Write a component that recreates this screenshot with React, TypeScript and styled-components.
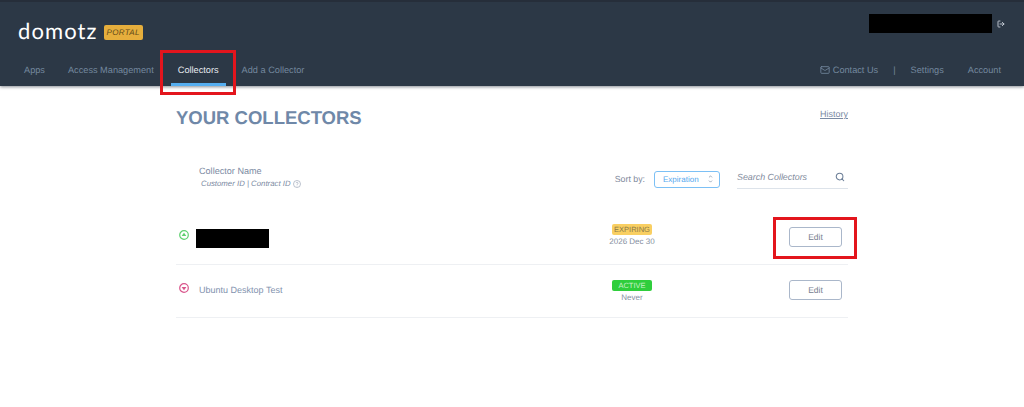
import React from 'react';
import styled, { createGlobalStyle } from 'styled-components';
import { LogOut, Mail, Search, ChevronUp, ChevronDown } from 'lucide-react';

const GlobalStyle = createGlobalStyle`
  html, body {
    margin: 0;
    padding: 0;
    background-color: #fff;
    font-family: "Liberation Sans", Arial, sans-serif;
  }

  * {
    text-rendering: geometricPrecision;
  }
`;

const Page = styled.div`
  position: relative;
  width: 1024px;
  height: 407px;
  overflow: hidden;
  background-color: #fff;
`;

const Header = styled.header`
  display: flex;
  flex-direction: column;
  height: 86px;
  box-sizing: border-box;
  background-color: #2c3846;
  border-top: 2px solid #262e3a;
  box-shadow: 0 1px 3px rgba(40, 48, 60, 0.55);
`;

const TopBar = styled.div`
  display: flex;
  justify-content: space-between;
  align-items: flex-start;
  height: 52px;
  padding: 0 19px 0 18px;
`;

const Brand = styled.div`
  display: flex;
  align-items: center;
  gap: 6px;
  margin-top: 16px;
`;

const Wordmark = styled.span`
  font-family: "Lato", sans-serif;
  font-weight: 400;
  font-size: 22px;
  line-height: 26px;
  letter-spacing: 1.1px;
  color: #fff;
`;

const PortalBadge = styled.span`
  display: block;
  margin-top: 2px;
  box-sizing: border-box;
  width: 39px;
  height: 15px;
  line-height: 15px;
  text-align: center;
  border-radius: 2px;
  background-color: #e6ae3c;
  color: #5f4a1a;
  font-size: 8px;
  font-style: italic;
  letter-spacing: 0.3px;
`;

const UserBox = styled.div`
  display: flex;
  align-items: center;
  gap: 5px;
  margin-top: 12px;
  color: #d5dbe3;
`;

const Redaction = styled.div<{ $w: number; $h: number }>`
  width: ${(p) => p.$w}px;
  height: ${(p) => p.$h}px;
  background-color: #000;
`;

const RowRedaction = styled(Redaction)`
  margin-top: 2px;
`;

const NavBar = styled.nav`
  display: flex;
  justify-content: space-between;
  height: 32px;
  padding: 0 16px 0 17px;
`;

const NavGroup = styled.div`
  display: flex;
  align-items: stretch;
`;

const NavItem = styled.a<{ $active?: boolean; $gap?: number }>`
  display: flex;
  align-items: center;
  gap: 3px;
  box-sizing: border-box;
  height: 32px;
  margin-right: ${(p) => p.$gap ?? 0}px;
  padding: ${(p) => (p.$active ? '2px 7px 0' : '0 7px 1px')};
  font-size: 9.2px;
  color: ${(p) => (p.$active ? '#e8ecf1' : '#74889f')};
  border-bottom: ${(p) => (p.$active ? '3px solid #55aef0' : 'none')};
`;

const NavDivider = styled.span`
  align-self: center;
  margin: 0 8px 1px 8px;
  font-size: 9.2px;
  color: #74889f;
`;

const Content = styled.main`
  width: 672px;
  margin: 0 auto;
`;

const TitleRow = styled.div`
  display: flex;
  justify-content: space-between;
  align-items: flex-start;
  height: 77px;
  padding-top: 21px;
  box-sizing: border-box;
`;

const Title = styled.h1`
  margin: 0;
  font-size: 18.5px;
  line-height: 22px;
  font-weight: 700;
  color: #6f88a8;
`;

const HistoryLink = styled.a`
  font-size: 9px;
  line-height: 14px;
  color: #7a8aa3;
  text-decoration: underline;
`;

const ListHeader = styled.div`
  display: flex;
  align-items: flex-start;
  justify-content: space-between;
  height: 49px;
`;

const NameColumn = styled.div`
  margin-left: 23px;
  padding-top: 1.5px;
`;

const NameLabel = styled.div`
  font-size: 9.1px;
  line-height: 13px;
  color: #7d8ba3;
`;

const IdLabel = styled.div`
  display: flex;
  align-items: center;
  gap: 2px;
  margin-left: 2px;
  font-size: 7.8px;
  line-height: 12px;
  font-style: italic;
  color: #7d8ba3;
`;

const Controls = styled.div`
  display: flex;
  align-items: center;
  margin-top: 6px;
`;

const SortLabel = styled.span`
  font-size: 8.8px;
  color: #7f8a9c;
  margin-right: 9px;
`;

const SortSelect = styled.div`
  display: flex;
  align-items: center;
  justify-content: space-between;
  box-sizing: border-box;
  width: 66px;
  height: 17px;
  padding: 0 6px 0 8px;
  border: 1px solid #7cc0f5;
  border-radius: 3px;
  font-size: 8px;
  color: #55a8ee;
`;

const Arrows = styled.span`
  display: flex;
  flex-direction: column;
  color: #6a7d96;
`;

const SearchBox = styled.div`
  display: flex;
  align-items: center;
  justify-content: space-between;
  box-sizing: border-box;
  width: 111px;
  height: 20px;
  margin-left: 17px;
  padding: 0 3px 3px 0;
  border-bottom: 1px solid #dde3ea;
  font-size: 8.9px;
  font-style: italic;
  color: #7f8a9c;
`;

const Row = styled.div`
  display: grid;
  grid-template-columns: 20px 1fr 112px 160px;
  height: 52px;
  border-bottom: 1px solid #eef0f3;
`;

const StatusIcon = styled.svg`
  margin: 18px 0 0 3px;
`;

const NameCell = styled.div`
  display: flex;
  align-items: center;
  padding-bottom: 2px;
`;

const CollectorName = styled.span`
  margin-left: 3px;
  font-size: 9px;
  color: #7f92ae;
`;

const ExpiryCell = styled.div<{ $pad: string }>`
  display: flex;
  flex-direction: column;
  align-items: center;
  justify-content: center;
  padding: ${(p) => p.$pad};
`;

const StatusPill = styled.span<{ $kind: 'expiring' | 'active' }>`
  box-sizing: border-box;
  width: 40px;
  height: 11px;
  line-height: 11px;
  text-align: center;
  border-radius: 2px;
  font-size: 7.5px;
  background-color: ${(p) => (p.$kind === 'active' ? '#2fce3c' : '#f9cf62')};
  color: ${(p) => (p.$kind === 'active' ? '#c8f0c8' : '#8b7a48')};
`;

const ExpiryDate = styled.span`
  margin-top: 1px;
  font-size: 8px;
  line-height: 11px;
  color: #858fa0;
`;

const ActionCell = styled.div`
  display: flex;
  align-items: center;
  justify-content: flex-end;
  padding: 0 6px 2px 0;
`;

const EditButton = styled.button`
  width: 53px;
  height: 20px;
  padding: 0;
  background-color: #fff;
  border: 1px solid #aab7ca;
  border-radius: 3px;
  font-family: inherit;
  font-size: 8.5px;
  color: #77808f;
`;

const Highlight = styled.div<{ $x: number; $y: number; $w: number; $h: number }>`
  position: absolute;
  left: ${(p) => p.$x}px;
  top: ${(p) => p.$y}px;
  width: ${(p) => p.$w}px;
  height: ${(p) => p.$h}px;
  box-sizing: border-box;
  border: 3px solid #e3151d;
  pointer-events: none;
`;

const Status: React.FC<{ color: string; up?: boolean }> = ({ color, up }) => (
  <StatusIcon width="10" height="10" viewBox="0 0 10 10">
    <circle cx="5" cy="5" r="4.3" fill="none" stroke={color} strokeWidth="1.2" />
    <path d={up ? 'M5 2.8L7.4 6H2.6Z' : 'M5 7.2L2.6 4H7.4Z'} fill={color} />
  </StatusIcon>
);

const HelpIcon = () => (
  <svg width="8" height="8" viewBox="0 0 8 8">
    <circle cx="4" cy="4" r="3.5" fill="none" stroke="#8e9aae" strokeWidth="0.6" />
    <path d="M2.9 3.1C3 2.3 5.1 2.2 5.1 3.2C5.1 4 4 3.9 4 4.9" fill="none" stroke="#8e9aae" strokeWidth="0.6" />
    <circle cx="4" cy="5.9" r="0.4" fill="#8e9aae" />
  </svg>
);

export default function App() {
  return (
    <Page>
      <GlobalStyle />
      <Header>
        <TopBar>
          <Brand>
            <Wordmark>domotz</Wordmark>
            <PortalBadge>PORTAL</PortalBadge>
          </Brand>
          <UserBox>
            <Redaction $w={123} $h={19} />
            <LogOut size={8} strokeWidth={2.5} />
          </UserBox>
        </TopBar>
        <NavBar>
          <NavGroup>
            <NavItem $gap={9}>Apps</NavItem>
            <NavItem $gap={10}>Access Management</NavItem>
            <NavItem $active $gap={9}>Collectors</NavItem>
            <NavItem>Add a Collector</NavItem>
          </NavGroup>
          <NavGroup>
            <NavItem>
              <Mail size={10} />
              Contact Us
            </NavItem>
            <NavDivider>|</NavDivider>
            <NavItem $gap={10}>Settings</NavItem>
            <NavItem>Account</NavItem>
          </NavGroup>
        </NavBar>
      </Header>
      <Content>
        <TitleRow>
          <Title>YOUR COLLECTORS</Title>
          <HistoryLink>History</HistoryLink>
        </TitleRow>
        <ListHeader>
          <NameColumn>
            <NameLabel>Collector Name</NameLabel>
            <IdLabel>
              Customer ID | Contract ID <HelpIcon />
            </IdLabel>
          </NameColumn>
          <Controls>
            <SortLabel>Sort by:</SortLabel>
            <SortSelect>
              Expiration
              <Arrows>
                <ChevronUp size={5} strokeWidth={3} />
                <ChevronDown size={5} strokeWidth={3} />
              </Arrows>
            </SortSelect>
            <SearchBox>
              Search Collectors
              <Search size={10} color="#6a7d96" strokeWidth={2.5} />
            </SearchBox>
          </Controls>
        </ListHeader>
        <Row>
          <Status color="#5fd070" up />
          <NameCell>
            <RowRedaction $w={73} $h={19} />
          </NameCell>
          <ExpiryCell $pad="0 0 5px">
            <StatusPill $kind="expiring">EXPIRING</StatusPill>
            <ExpiryDate>2026 Dec 30</ExpiryDate>
          </ExpiryCell>
          <ActionCell>
            <EditButton>Edit</EditButton>
          </ActionCell>
        </Row>
        <Row>
          <Status color="#d9568c" />
          <NameCell>
            <CollectorName>Ubuntu Desktop Test</CollectorName>
          </NameCell>
          <ExpiryCell $pad="1px 0 0">
            <StatusPill $kind="active">ACTIVE</StatusPill>
            <ExpiryDate>Never</ExpiryDate>
          </ExpiryCell>
          <ActionCell>
            <EditButton>Edit</EditButton>
          </ActionCell>
        </Row>
      </Content>
      <Highlight $x={160} $y={50} $w={76} $h={45} />
      <Highlight $x={773} $y={217} $w={84} $h={42} />
    </Page>
  );
}
